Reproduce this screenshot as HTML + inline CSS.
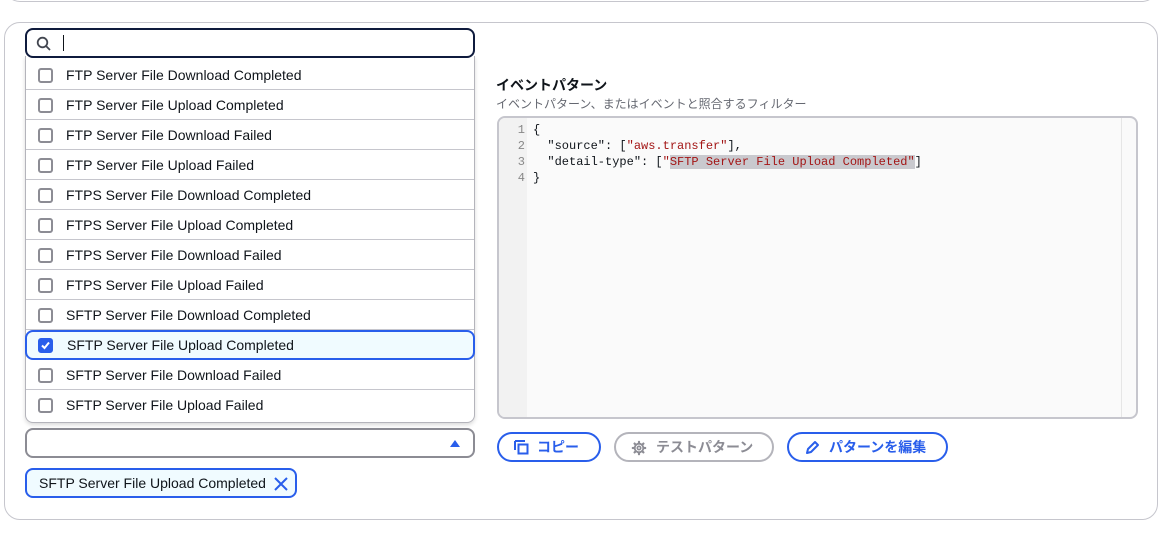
<!DOCTYPE html><html><head><meta charset="utf-8"><style>
*{box-sizing:border-box;margin:0;padding:0}
body{width:1162px;height:539px;background:#fff;font-family:"Liberation Sans","Noto Sans CJK JP",sans-serif;color:#0f141a;position:relative;overflow:hidden}
.abs{position:absolute}
.topcard{left:4px;top:-20px;width:1154px;height:22px;border:1px solid #c6c6cd;border-top:none;border-radius:0 0 16px 16px}
.card{left:4px;top:22px;width:1154px;height:498px;border:1px solid #c6c6cd;border-radius:16px}
.search{left:25px;top:28px;width:450px;height:30px;border:2px solid #0f1b3d;border-radius:8px;background:#fff;z-index:3}
.list{left:25px;top:56px;width:450px;height:367px;border:1px solid #b4b4bb;border-top:none;border-radius:0 0 8px 8px;background:#fff;z-index:2;box-shadow:0 2px 4px rgba(0,0,0,.15)}
.row{position:absolute;left:0;width:448px;height:30px;border-bottom:1px solid #c6c6cd;font-size:14px;line-height:30px;padding-left:40px}
.row .cb{position:absolute;left:12px;top:8px;width:15px;height:15px;border:2px solid #8c8c94;border-radius:3px}
.sel{border:2px solid #295eeb;border-radius:8px;background:#f0fbff;left:-1px;width:450px;line-height:26px}
.sel .cb{background:#295eeb;border-color:#295eeb;top:6px;left:11px}
.selbox{left:25px;top:428px;width:450px;height:30px;border:2px solid #8c8c94;border-radius:8px}
.token{left:25px;top:468px;width:272px;height:30px;border:2px solid #295eeb;border-radius:8px;background:#f0fbff;font-size:14px;line-height:26px;padding-left:12px}
.btn{top:432px;height:30px;border:2px solid #295eeb;border-radius:16px;color:#295eeb;font-size:14px;font-weight:bold;line-height:26px}
.code{font-family:"Liberation Mono",monospace;font-size:12px;line-height:16px;white-space:pre}
</style></head><body>
<div class="abs topcard"></div>
<div class="abs card"></div>
<div class="abs search"><svg class="abs" style="left:9px;top:6px" width="16" height="16" viewBox="0 0 16 16"><circle cx="6.5" cy="6.5" r="4.8" fill="none" stroke="#424650" stroke-width="1.8"/><line x1="10" y1="10" x2="14" y2="14" stroke="#424650" stroke-width="1.8"/></svg><div class="abs" style="left:36px;top:5px;width:1px;height:16px;background:#0f141a"></div></div>
<div class="abs list">
<div class="row" style="top:4px"><span class="cb"></span>FTP Server File Download Completed</div>
<div class="row" style="top:34px"><span class="cb"></span>FTP Server File Upload Completed</div>
<div class="row" style="top:64px"><span class="cb"></span>FTP Server File Download Failed</div>
<div class="row" style="top:94px"><span class="cb"></span>FTP Server File Upload Failed</div>
<div class="row" style="top:124px"><span class="cb"></span>FTPS Server File Download Completed</div>
<div class="row" style="top:154px"><span class="cb"></span>FTPS Server File Upload Completed</div>
<div class="row" style="top:184px"><span class="cb"></span>FTPS Server File Download Failed</div>
<div class="row" style="top:214px"><span class="cb"></span>FTPS Server File Upload Failed</div>
<div class="row" style="top:244px"><span class="cb"></span>SFTP Server File Download Completed</div>
<div class="row sel" style="top:274px"><span class="cb"><svg width="11" height="11" viewBox="0 0 11 11" style="display:block"><path d="M2 5.5l2.5 2.5L9 2.5" fill="none" stroke="#fff" stroke-width="2"/></svg></span>SFTP Server File Upload Completed</div>
<div class="row" style="top:304px"><span class="cb"></span>SFTP Server File Download Failed</div>
<div class="row" style="top:334px;border-bottom:none"><span class="cb"></span>SFTP Server File Upload Failed</div>
</div>
<div class="abs selbox"><svg class="abs" style="left:422px;top:8px" width="12" height="10"><path d="M1 9L6 2L11 9Z" fill="#295eeb"/></svg></div>
<div class="abs token">SFTP Server File Upload Completed<svg class="abs" style="left:247px;top:7px" width="14" height="14"><path d="M1 1L13 13M13 1L1 13" stroke="#295eeb" stroke-width="2"/></svg></div>

<div class="abs" style="left:496px;top:75px;font-size:14px;font-weight:bold">イベントパターン</div>
<div class="abs" style="left:496px;top:95px;font-size:12px;color:#656871">イベントパターン、またはイベントと照合するフィルター</div>
<div class="abs" style="left:497px;top:116px;width:641px;height:303px;border:2px solid #c6c6cd;border-radius:8px;background:#fafafa;overflow:hidden">
<div class="abs" style="left:0;top:0;width:28px;height:100%;background:#f2f2f2"></div>
<div class="abs" style="right:14px;top:0;width:1px;height:100%;background:#e6e6e6"></div>
<div class="abs code" style="left:8px;top:4px;color:#888;text-align:right;width:18px">1
2
3
4</div>
<div class="abs code" style="left:34px;top:4px;color:#0f141a">{
  "source": [<span style="color:#a31515">"aws.transfer"</span>],
  "detail-type": [<span style="color:#a31515">"<span style="background:#c9c9ce">SFTP Server File Upload Completed"</span></span>]
}</div>
</div>
<div class="abs btn" style="left:497px;width:104px;padding-left:38px"><svg class="abs" style="left:15px;top:6px" width="15" height="15"><path d="M1 1v9M1 1h10" stroke="#295eeb" stroke-width="2" fill="none"/><rect x="4.5" y="4.5" width="9" height="9" stroke="#295eeb" stroke-width="2" fill="none"/></svg>コピー</div>
<div class="abs btn" style="left:614px;width:160px;padding-left:40px;border-color:#b4b4bb;color:#8c8c94"><svg class="abs" style="left:15px;top:6px" width="16" height="16" viewBox="0 0 16 16"><g stroke="#8c8c94" stroke-width="2.2" stroke-linecap="round"><path d="M8 1.8v1.4M8 12.8v1.4M1.8 8h1.4M12.8 8h1.4M3.6 3.6l1 1M11.4 11.4l1 1M3.6 12.4l1-1M11.4 4.6l1-1"/></g><circle cx="8" cy="8" r="4.3" fill="#fff" stroke="#8c8c94" stroke-width="1.8"/><circle cx="8" cy="8" r="1.7" fill="none" stroke="#8c8c94" stroke-width="1.6"/></svg>テストパターン</div>
<div class="abs btn" style="left:787px;width:161px;padding-left:40px"><svg class="abs" style="left:16px;top:6px" width="15" height="15" viewBox="0 0 15 15"><path d="M2 13l1-4L10 2l3 3-7 7z" fill="none" stroke="#295eeb" stroke-width="2" stroke-linejoin="round"/></svg>パターンを編集</div>
</body></html>
